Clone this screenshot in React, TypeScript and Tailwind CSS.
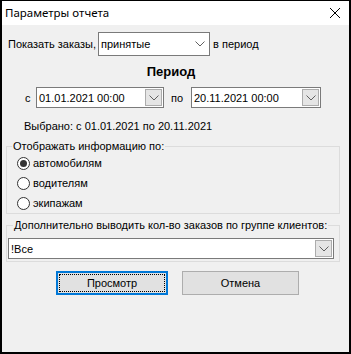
import type { ReactNode } from 'react'

function Chevron() {
  return (
    <svg width="10" height="6" viewBox="0 0 10 6" fill="none">
      <polyline points="0.5,0.5 5,5 9.5,0.5" stroke="#606060" strokeWidth="1" />
    </svg>
  )
}

function DropButton() {
  return (
    <div className="flex h-[17px] w-[17px] items-center justify-center border border-[#acacac] bg-[#e5e5e5]">
      <Chevron />
    </div>
  )
}

function DateBox({ value, width }: { value: string; width: string }) {
  return (
    <div
      className={`flex h-[21px] ${width} items-center justify-between border border-[#7a7a7a] bg-white pl-[2px] pr-px`}
    >
      <span>{value}</span>
      <DropButton />
    </div>
  )
}

function Radio({ checked, children }: { checked?: boolean; children: ReactNode }) {
  return (
    <div className="flex h-[20px] items-center gap-[3px]">
      <div className="flex h-[13px] w-[13px] items-center justify-center rounded-full border border-[#333333] bg-white">
        {checked && <div className="h-[7px] w-[7px] rounded-full bg-[#333333]" />}
      </div>
      <span>{children}</span>
    </div>
  )
}

export default function App() {
  return (
    <div className="h-[354px] w-[351px] bg-black px-[2px] pt-px pb-[2px]">
      <div className="flex h-full flex-col bg-[#f0f0f0] text-[11px] leading-[14px] text-black [font-family:'Liberation_Sans',Arial,sans-serif]">
        <div className="flex h-[24px] shrink-0 items-center justify-between bg-white pr-[9px] pl-[3px] text-[11.5px] [font-family:'Noto_Sans',sans-serif]">
          <span>Параметры отчета</span>
          <svg width="10" height="10" viewBox="0 0 10 10">
            <path d="M0 0L10 10M10 0L0 10" stroke="#000" strokeWidth="1" />
          </svg>
        </div>

        <div className="mt-[7px] flex h-[24px] items-center pl-[6px]">
          <span>Показать заказы,</span>
          <div className="ml-[2px] flex h-[24px] w-[112px] items-center justify-between border border-[#7a7a7a] bg-white pr-[4px] pl-[2px]">
            <span>принятые</span>
            <Chevron />
          </div>
          <span className="ml-[3px]">в период</span>
        </div>

        <div className="mt-[8px] flex h-[16px] items-center justify-center pr-[9px] text-[13px] font-bold">
          Период
        </div>

        <div className="mt-[7px] flex h-[21px] items-center pl-[23px]">
          <span className="w-[11px]">с</span>
          <DateBox value="01.01.2021 00:00" width="w-[128px]" />
          <span className="ml-[7px] w-[20px]">по</span>
          <DateBox value="20.11.2021 00:00" width="w-[130px]" />
        </div>

        <div className="mt-[11px] pl-[22px]">Выбрано: с 01.01.2021 по 20.11.2021</div>

        <fieldset className="mt-[6px] ml-[4px] w-[334px] border border-[#dcdcdc] pl-[10px]">
          <legend className="-ml-[5px] px-px leading-[14px]">Отображать информацию по:</legend>
          <Radio checked>автомобилям</Radio>
          <Radio>водителям</Radio>
          <Radio>экипажам</Radio>
        </fieldset>

        <fieldset className="mt-[4px] ml-[4px] w-[334px] border border-[#dcdcdc] px-px pb-[2px]">
          <legend className="ml-[5px] px-px leading-[14px]">
            Дополнительно выводить кол-во заказов по группе клиентов:
          </legend>
          <div className="mt-[6px] flex h-[21px] w-[326px] items-center justify-between border border-[#7a7a7a] bg-white pr-px pl-[2px]">
            <span>!Все</span>
            <DropButton />
          </div>
        </fieldset>

        <div className="mt-[9px] flex pl-[54px]">
          <div className="h-[24px] w-[112px] border-2 border-[#0078d7] bg-[#e1e1e1] p-px">
            <div className="flex h-full w-full items-center justify-center border border-dotted border-black">
              Просмотр
            </div>
          </div>
          <div className="ml-[14px] flex h-[24px] w-[117px] items-center justify-center border border-[#adadad] bg-[#e1e1e1]">
            Отмена
          </div>
        </div>
      </div>
    </div>
  )
}
